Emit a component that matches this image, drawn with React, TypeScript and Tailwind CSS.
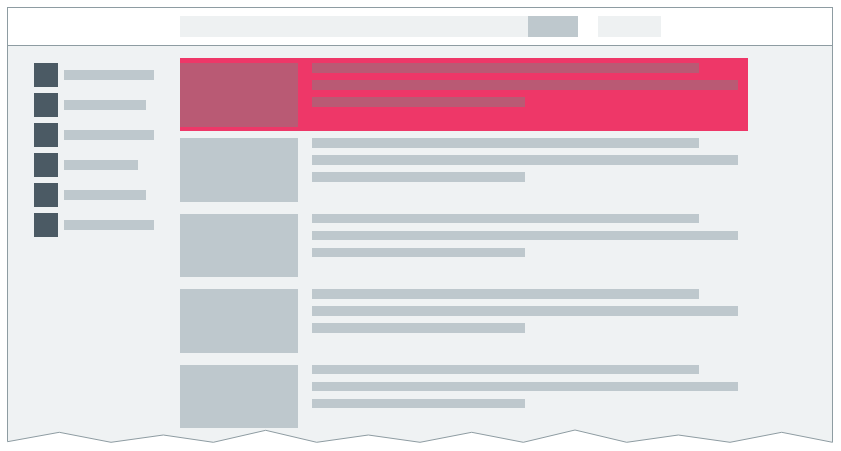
const sideBars = [90, 82, 90, 74, 82, 90];

const zigzag: [number, number][] = [
  [0.5, 12.7], [52.3, 3.3], [104, 13.3], [156.3, 6], [206.3, 13.3],
  [258.7, 1.3], [309.7, 13.3], [361.3, 6], [413, 13.3], [464.7, 3.3],
  [516.3, 13.3], [568, 1], [619.7, 13.3], [671.3, 6], [723, 13.3],
  [774.7, 3.3], [825.5, 13.3],
];

function Item({ active = false }: { active?: boolean }) {
  const fill = active ? "bg-[#b95a74]" : "bg-[#bec8cd]";
  return (
    <div className="flex h-[63.5px] gap-[14px]">
      <div className={`w-[118px] h-full shrink-0 ${fill}`} />
      <div className="flex flex-col gap-[7.5px]">
        <div className={`h-[9.5px] w-[387px] ${fill}`} />
        <div className={`h-[9.5px] w-[426px] ${fill}`} />
        <div className={`h-[9.5px] w-[213px] ${fill}`} />
      </div>
    </div>
  );
}

export default function App() {
  const line = zigzag.map(([x, y]) => `${x},${y}`).join(" ");
  return (
    <div className="w-[841px] h-[451px] bg-white pt-[7px] pl-[7px] overflow-hidden">
      <div className="w-[826px] flex flex-col">
        {/* header */}
        <div className="h-[39px] border border-[#8e9ca2] bg-white flex items-center pl-[172px]">
          <div className="w-[348px] h-[21px] bg-[#eef1f2]" />
          <div className="w-[50px] h-[21px] bg-[#bec8cd]" />
          <div className="w-[63px] h-[21px] bg-[#eef1f2] ml-[20px]" />
        </div>

        {/* body */}
        <div className="h-[384px] border-x border-[#8e9ca2] bg-[#eff2f3] flex items-start pl-[26px]">
          <div className="w-[146px] shrink-0 pt-[17px] flex flex-col gap-[6px]">
            {sideBars.map((w, i) => (
              <div key={i} className="flex items-center gap-[6px]">
                <div className="w-[24px] h-[24px] bg-[#4b5a64]" />
                <div className="h-[9.5px] bg-[#bec8cd]" style={{ width: w }} />
              </div>
            ))}
          </div>

          <div className="w-[568px] pt-[12px] flex flex-col">
            <div className="bg-[#ee3768] pt-[5px] pb-[4px]">
              <Item active />
            </div>
            <div className="mt-[7.5px] flex flex-col gap-[12px]">
              <Item />
              <Item />
              <Item />
              <Item />
            </div>
          </div>
        </div>

        {/* torn bottom edge */}
        <svg width="826" height="15" viewBox="0 0 826 15" className="block -mt-px">
          <polygon points={`0.5,0 ${line} 825.5,0`} fill="#eff2f3" />
          <polyline points={line} fill="none" stroke="#8e9ca2" strokeWidth="1" />
          <line x1="0.5" y1="0" x2="0.5" y2="12.7" stroke="#8e9ca2" strokeWidth="1" />
          <line x1="825.5" y1="0" x2="825.5" y2="13.3" stroke="#8e9ca2" strokeWidth="1" />
        </svg>
      </div>
    </div>
  );
}
